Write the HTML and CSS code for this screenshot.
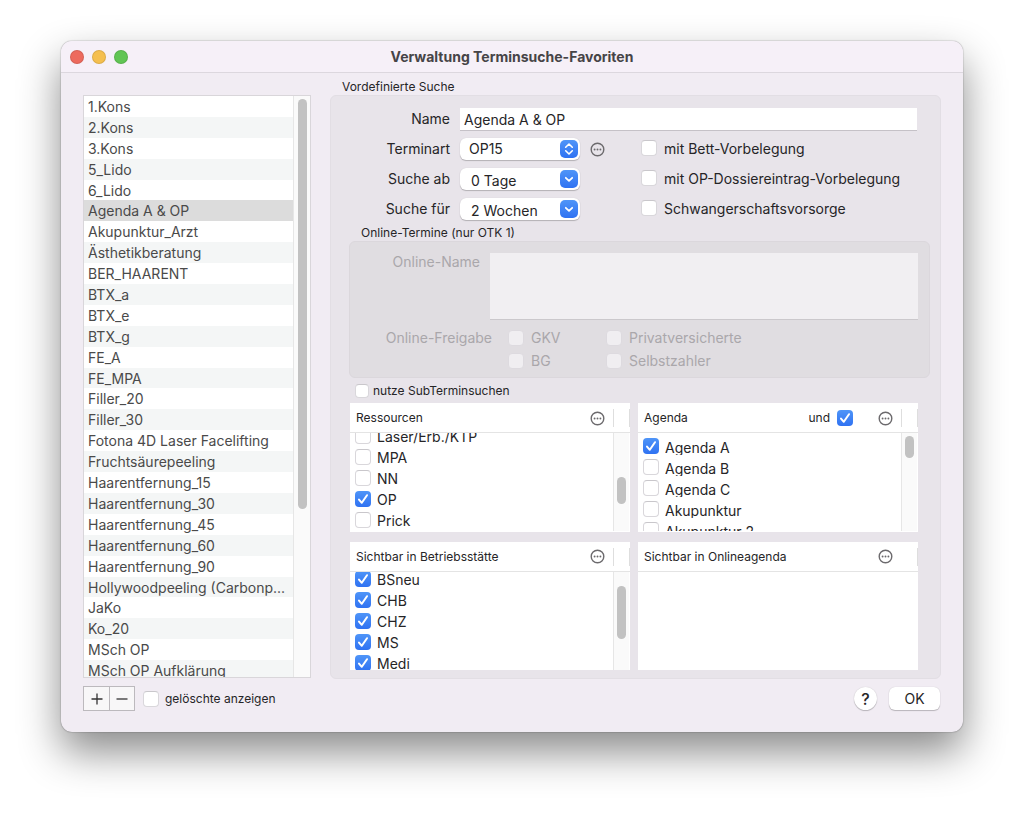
FILE: index.html
```html
<!DOCTYPE html>
<html lang="de">
<head>
<meta charset="utf-8">
<title>Verwaltung Terminsuche-Favoriten</title>
<link rel="stylesheet" href="styles.css">
</head>
<body>
<svg class="defs" aria-hidden="true">
  <symbol id="more" viewBox="0 0 15 15"><circle cx="7.5" cy="7.5" r="6.3" fill="none" stroke="#6c6a6d" stroke-width="1.4"/><circle cx="4.6" cy="7.5" r=".95" fill="#6c6a6d"/><circle cx="7.5" cy="7.5" r=".95" fill="#6c6a6d"/><circle cx="10.4" cy="7.5" r=".95" fill="#6c6a6d"/></symbol>
  <symbol id="updown" viewBox="0 0 18 18"><path d="M5.7 7.2 9 4l3.3 3.2M5.7 10.8 9 14l3.3-3.2" fill="none" stroke="#fff" stroke-width="1.6" stroke-linecap="round" stroke-linejoin="round"/></symbol>
  <symbol id="down" viewBox="0 0 18 18"><path d="M5.8 7.8 9 10.8l3.2-3" fill="none" stroke="#fff" stroke-width="1.8" stroke-linecap="round" stroke-linejoin="round"/></symbol>
</svg>
<div class="window">
  <header class="titlebar">
    <div class="lights">
      <button class="light red" aria-label="Schließen"></button>
      <button class="light yellow" aria-label="Minimieren"></button>
      <button class="light green" aria-label="Vergrößern"></button>
    </div>
    <h1>Verwaltung Terminsuche-Favoriten</h1>
  </header>
  <main class="content">
    <h2 class="caption">Vordefinierte Suche</h2>
    <div class="favorites">
      <ul class="fav-list">
        <li>1.Kons</li><li>2.Kons</li><li>3.Kons</li><li>5_Lido</li><li>6_Lido</li>
        <li class="selected">Agenda A &amp; OP</li><li>Akupunktur_Arzt</li><li>Ästhetikberatung</li><li>BER_HAARENT</li>
        <li>BTX_a</li><li>BTX_e</li><li>BTX_g</li><li>FE_A</li><li>FE_MPA</li><li>Filler_20</li><li>Filler_30</li>
        <li>Fotona 4D Laser Facelifting</li><li>Fruchtsäurepeeling</li><li>Haarentfernung_15</li><li>Haarentfernung_30</li>
        <li>Haarentfernung_45</li><li>Haarentfernung_60</li><li>Haarentfernung_90</li><li>Hollywoodpeeling (Carbonp...</li>
        <li>JaKo</li><li>Ko_20</li><li>MSch OP</li><li>MSch OP Aufklärung</li>
      </ul>
      <div class="track"><div class="thumb thumb-fav"></div></div>
    </div>
    <section class="panel">
      <div class="form">
        <label for="name">Name</label>
        <input id="name" class="text" type="text" value="Agenda A &amp; OP">

        <label for="art">Terminart</label>
        <div class="picker"><select id="art"><option>OP15</option></select><svg><use href="#updown"/></svg></div>
        <button class="more" aria-label="Terminart Optionen"><svg><use href="#more"/></svg></button>
        <label class="check"><input type="checkbox"><span>mit Bett-Vorbelegung</span></label>

        <label for="ab">Suche ab</label>
        <div class="picker combo"><select id="ab"><option>0 Tage</option></select><svg><use href="#down"/></svg></div>
        <label class="check last"><input type="checkbox"><span>mit OP-Dossiereintrag-Vorbelegung</span></label>

        <label for="fuer">Suche für</label>
        <div class="picker combo"><select id="fuer"><option>2 Wochen</option></select><svg><use href="#down"/></svg></div>
        <label class="check last"><input type="checkbox"><span>Schwangerschaftsvorsorge</span></label>
      </div>

      <h3 class="subcaption">Online-Termine (nur OTK 1)</h3>
      <div class="online">
        <div class="online-name">
          <label for="oname">Online-Name</label>
          <textarea id="oname" disabled></textarea>
        </div>
        <div class="release">
          <span class="release-label">Online-Freigabe</span>
          <label class="check"><input type="checkbox" disabled><span>GKV</span></label>
          <label class="check"><input type="checkbox" disabled><span>Privatversicherte</span></label>
          <label class="check second"><input type="checkbox" disabled><span>BG</span></label>
          <label class="check"><input type="checkbox" disabled><span>Selbstzahler</span></label>
        </div>
      </div>

      <label class="check sub"><input type="checkbox"><span>nutze SubTerminsuchen</span></label>

      <div class="tables">
        <section class="box">
          <header><h4>Ressourcen</h4><button class="more" aria-label="Ressourcen Optionen"><svg><use href="#more"/></svg></button><i class="cell"></i></header>
          <div class="body">
            <div class="rows from-laser">
              <label class="check"><input type="checkbox"><span>Laser/Erb./KTP</span></label>
              <label class="check"><input type="checkbox"><span>MPA</span></label>
              <label class="check"><input type="checkbox"><span>NN</span></label>
              <label class="check"><input type="checkbox" checked><span>OP</span></label>
              <label class="check"><input type="checkbox"><span>Prick</span></label>
            </div>
            <div class="track"><div class="thumb thumb-res"></div></div>
          </div>
        </section>
        <section class="box">
          <header><h4>Agenda</h4><label class="check und"><span>und</span><input type="checkbox" checked></label><button class="more" aria-label="Agenda Optionen"><svg><use href="#more"/></svg></button><i class="cell"></i></header>
          <div class="body">
            <div class="rows tight">
              <label class="check"><input type="checkbox" checked><span>Agenda A</span></label>
              <label class="check"><input type="checkbox"><span>Agenda B</span></label>
              <label class="check"><input type="checkbox"><span>Agenda C</span></label>
              <label class="check"><input type="checkbox"><span>Akupunktur</span></label>
              <label class="check"><input type="checkbox"><span>Akupunktur 2</span></label>
            </div>
            <div class="track"><div class="thumb thumb-ag"></div></div>
          </div>
        </section>
        <section class="box">
          <header><h4>Sichtbar in Betriebsstätte</h4><button class="more" aria-label="Betriebsstätte Optionen"><svg><use href="#more"/></svg></button><i class="cell"></i></header>
          <div class="body">
            <div class="rows from-bs">
              <label class="check"><input type="checkbox" checked><span>BSneu</span></label>
              <label class="check"><input type="checkbox" checked><span>CHB</span></label>
              <label class="check"><input type="checkbox" checked><span>CHZ</span></label>
              <label class="check"><input type="checkbox" checked><span>MS</span></label>
              <label class="check"><input type="checkbox" checked><span>Medi</span></label>
            </div>
            <div class="track"><div class="thumb thumb-bs"></div></div>
          </div>
        </section>
        <section class="box">
          <header><h4>Sichtbar in Onlineagenda</h4><button class="more" aria-label="Onlineagenda Optionen"><svg><use href="#more"/></svg></button><i class="cell open"></i></header>
          <div class="body"></div>
        </section>
      </div>
    </section>
  </main>
  <footer class="footer">
    <div class="addremove">
      <button aria-label="Hinzufügen"><svg viewBox="0 0 12 12"><path d="M6 .5v11M.5 6h11" stroke="#333" stroke-width="1.3"/></svg></button>
      <button aria-label="Entfernen"><svg viewBox="0 0 12 12"><path d="M.5 6h11" stroke="#333" stroke-width="1.3"/></svg></button>
    </div>
    <label class="check deleted"><input type="checkbox"><span>gelöschte anzeigen</span></label>
    <button class="help">?</button>
    <button class="ok">OK</button>
  </footer>
</div>
</body>
</html>
```
FILE: styles.css
```css
* { box-sizing: border-box; }
body {
  margin: 0;
  min-height: 100vh;
  padding: 41px 61px 81px;
  display: flex;
  flex-direction: column;
  background: #fff;
  color: #262527;
  font: 14px/20px Inter, "Liberation Sans", sans-serif;
  overflow: hidden;
}
.defs { display: none; }
h1, h2, h3, h4, ul { margin: 0; padding: 0; font-weight: 400; }
button, input, select, textarea { font: inherit; color: inherit; margin: 0; }
button { padding: 0; border: 0; background: none; }

.window {
  flex: 1;
  display: flex;
  flex-direction: column;
  border-radius: 11px;
  background: #f1ecf3;
  box-shadow: 0 0 1px rgba(0, 0, 0, .5), 0 0 2px rgba(0, 0, 0, .15), 0 20px 42px rgba(0, 0, 0, .46);
}
.titlebar {
  display: grid;
  grid-template-columns: 1fr auto 1fr;
  align-items: center;
  height: 32px;
  padding: 0 9px;
  border-radius: 11px 11px 0 0;
  border-bottom: 1px solid #dcd7de;
  background: #f6f0f8;
}
.titlebar h1 { font-size: 14px; font-weight: 700; color: #464447; }
.lights { display: flex; gap: 8px; }
.light { width: 14px; height: 14px; border-radius: 50%; border: 1px solid rgba(0, 0, 0, .1); }
.red { background: #ed6a5e; }
.yellow { background: #f5bf4f; }
.green { background: #61c554; }

.content {
  flex: 1;
  display: grid;
  grid-template-columns: 228px 1fr;
  grid-template-rows: 22px 1fr;
  column-gap: 19px;
  padding: 0 22px;
}
.caption { grid-column: 2; padding: 4px 0 0 12px; font-size: 12px; line-height: 20px; }

.favorites {
  display: flex;
  height: 583px;
  border: 1px solid #d9d6da;
  background: #fff;
  overflow: hidden;
}
.fav-list {
  flex: 1;
  height: 585px;
  display: grid;
  grid-template-rows: repeat(28, minmax(0, 1fr));
  list-style: none;
  line-height: 22px;
  color: #4a4a4a;
}
.fav-list li { padding-left: 4px; white-space: nowrap; }
.fav-list li:nth-child(even) { background: #f4f6f6; }
.fav-list li.selected { background: #dcdcdc; }
.track { width: 17px; flex: none; padding: 0 4px; border-left: 1px solid #e6e6e6; background: #fafafa; }
.thumb { width: 9px; border-radius: 5px; background: #c2c2c2; }
.thumb-fav { margin-top: 3px; height: 410px; }
.thumb-res { margin-top: 44px; height: 27px; }
.thumb-ag { margin-top: 3px; height: 22px; }
.thumb-bs { margin-top: 14px; height: 53px; }

.panel {
  display: flex;
  flex-direction: column;
  padding: 8px 0;
  border: 1px solid #e2dee4;
  border-radius: 6px;
  background: #e8e4ea;
}
.form {
  display: grid;
  grid-template-columns: 119px 120px 1fr 276px;
  grid-auto-rows: 30px;
  column-gap: 10px;
  align-items: center;
  padding-right: 23px;
}
.form > label:not(.check) { text-align: right; }
.form .last { grid-column: 4; }
.text {
  grid-column: 2 / -1;
  width: 100%;
  height: 23px;
  padding: 2px 4px 0;
  border: 0;
  border-bottom: 1px solid #c5c1c7;
  background: #fff;
}
.picker { position: relative; }
.picker select {
  display: block;
  width: 100%;
  height: 22px;
  padding: 0 30px 0 9px;
  border: 0;
  border-radius: 6px;
  appearance: none;
  background: #fff;
  box-shadow: 0 1px 1px rgba(0, 0, 0, .22), 0 0 1px rgba(0, 0, 0, .15);
}
.picker.combo select { padding: 3px 30px 0 11px; }
.picker svg {
  position: absolute;
  top: 2px;
  right: 2px;
  width: 18px;
  height: 18px;
  border-radius: 5px;
  background: linear-gradient(#4f95f8, #2f72f2);
  pointer-events: none;
}
.more { width: 15px; height: 15px; }
.more svg { display: block; width: 15px; height: 15px; }

.check { display: flex; align-items: center; gap: 7px; white-space: nowrap; }
.check input {
  flex: none;
  width: 16px;
  height: 16px;
  margin-bottom: 2px;
  appearance: none;
  border: 1px solid #d9d7db;
  border-top-color: #c9c7cb;
  border-radius: 4px;
  background: #fff;
}
.check input:checked {
  border: 0;
  background: url("data:image/svg+xml,%3Csvg xmlns='http://www.w3.org/2000/svg' viewBox='0 0 16 16'%3E%3Cpath d='M4 8.6l2.8 3.2L12 4.2' fill='none' stroke='white' stroke-width='2' stroke-linecap='round' stroke-linejoin='round'/%3E%3C/svg%3E"), linear-gradient(#4f95f8, #2f72f2);
}

.subcaption { margin-top: 1px; padding-left: 30px; font-size: 12px; line-height: 16px; }
.online {
  margin: 0 10px 0 18px;
  padding: 11px 11px 5px 0;
  border: 1px solid #dbd7dc;
  border-radius: 6px;
  background: #e0dde1;
  color: #aaa7ab;
}
.online-name { display: grid; grid-template-columns: 130px 1fr; column-gap: 10px; text-align: right; line-height: 18px; }
.online textarea {
  width: 100%;
  height: 67px;
  resize: none;
  border: 0;
  border-bottom: 1px solid #cbc8cc;
  background: #f1eff2;
}
.release {
  display: grid;
  grid-template-columns: 142px 82px 1fr;
  grid-auto-rows: 23px;
  column-gap: 16px;
  align-items: center;
  margin-top: 6px;
}
.release-label { text-align: right; }
.release .second { grid-column: 2; }
.release .check input { margin-bottom: 0; }
.check input:disabled { border-color: #dddadf; background: #f0eef1; }

.sub { height: 25px; padding-left: 24px; font-size: 12px; gap: 4px; }
.sub input { width: 14px; height: 14px; margin: 0; }

.tables {
  flex: 1;
  display: grid;
  grid-template-columns: 1fr 1fr;
  grid-template-rows: 1fr 1fr;
  gap: 10px 8px;
  padding: 0 22px 0 19px;
}
.box { display: flex; flex-direction: column; background: #fff; }
.box header {
  display: flex;
  align-items: center;
  height: 30px;
  padding: 1px 0 0 6px;
  border-bottom: 1px solid #e4e4e4;
  font-size: 12px;
}
.box h4 { flex: 1; font-size: 12px; }
.cell { width: 17px; height: 18px; margin-left: 8px; border: solid #dedede; border-width: 0 1px; }
.cell.open { border-left-color: transparent; }
.und { margin-right: 25px; }
.und input { margin: 0; }
.body { display: flex; flex: 1 1 0; min-height: 98px; max-height: 98px; overflow: hidden; }
.body .track { width: 16px; margin-right: 1px; padding: 0 3px; }
.rows { flex: 1; padding-left: 5px; }
.rows .check { height: 21px; gap: 6px; }
.from-laser { margin-top: -7px; }
.from-bs { margin-top: -2px; }
.tight { padding-top: 3px; }
.tight .check span { height: 16px; line-height: 17px; overflow: hidden; }

.footer { display: flex; align-items: center; padding: 7px 23px 21px 22px; }
.addremove { display: flex; border: 1px solid #bcb9bd; background: #f8f7f8; }
.addremove button { width: 25px; height: 23px; }
.addremove button + button { border-left: 1px solid #bcb9bd; }
.addremove svg { display: block; width: 12px; height: 12px; margin: auto; }
.deleted { margin: 0 auto 0 8px; font-size: 12px; gap: 6px; }
.deleted input { margin: 0; }
.help, .ok {
  height: 23px;
  background: #fff;
  box-shadow: 0 1px 1px rgba(0, 0, 0, .22), 0 0 1px rgba(0, 0, 0, .2);
}
.help { width: 23px; margin-right: 12px; border-radius: 50%; font-size: 16px; font-weight: 500; }
.ok { width: 51px; border-radius: 6px; }
```
